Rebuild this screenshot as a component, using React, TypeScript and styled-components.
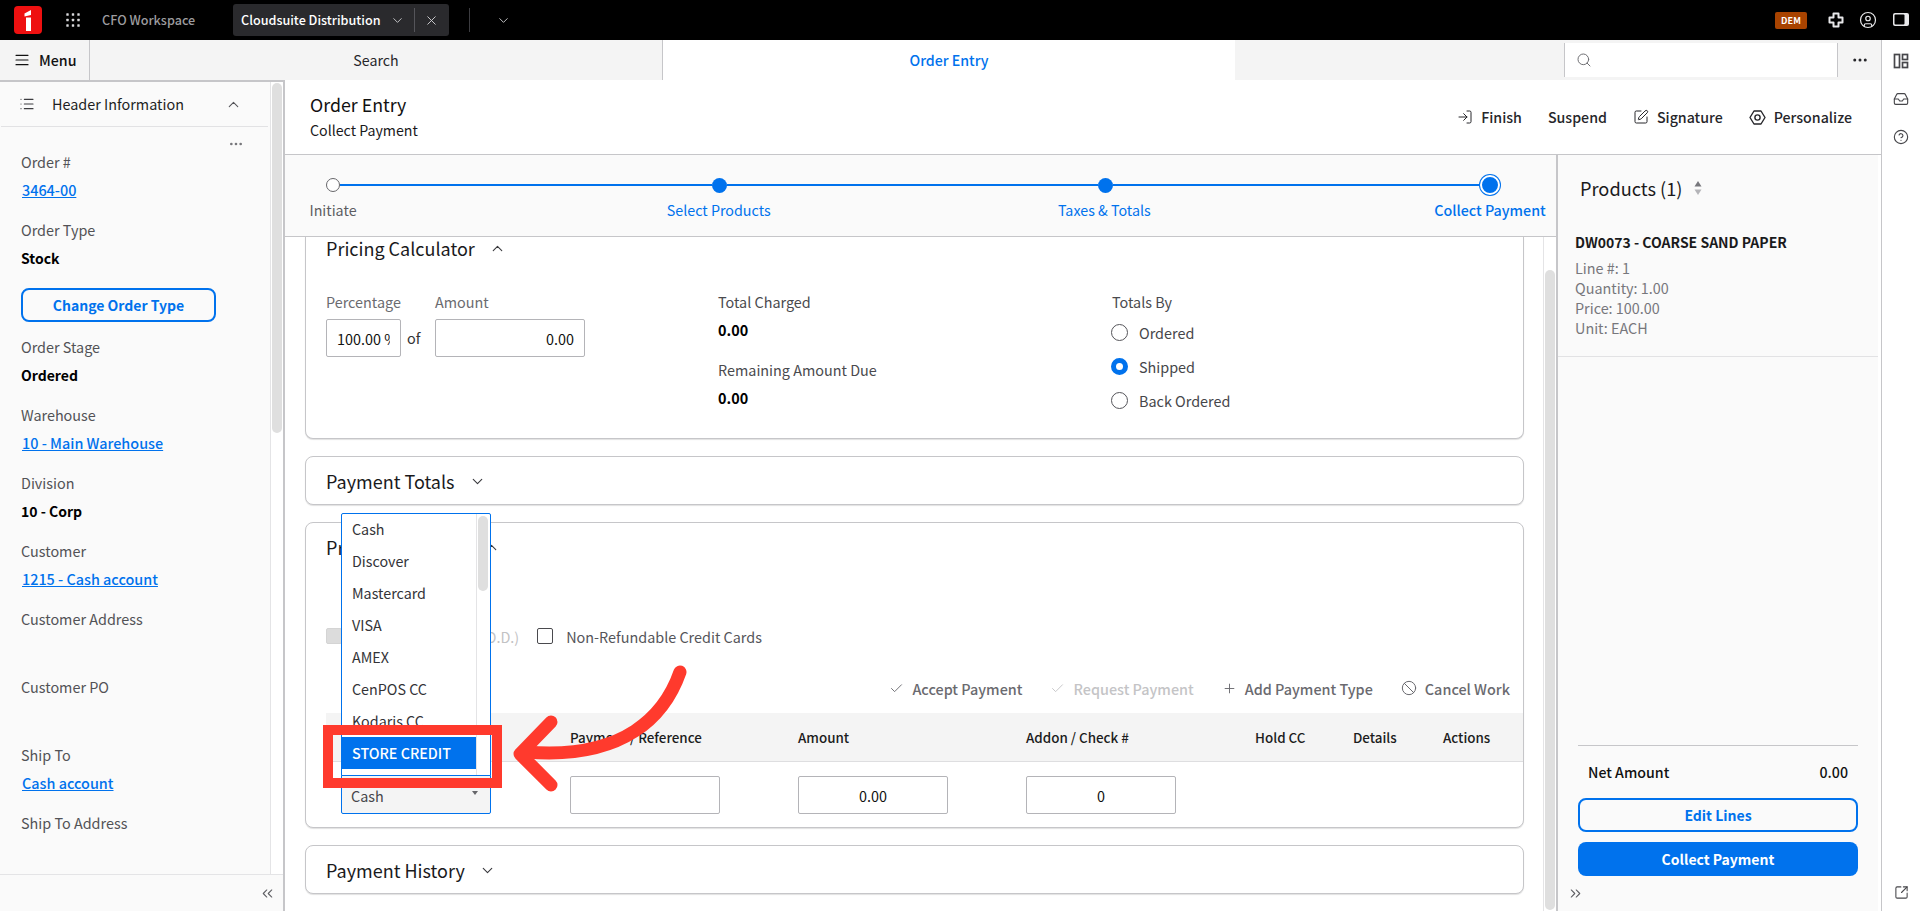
import React from 'react';
import styled, { createGlobalStyle } from 'styled-components';
import {
  AlignJustify, Ban, Check, ChevronDown, ChevronUp, ChevronsLeft, ChevronsRight, CircleHelp, CircleUser,
  Ellipsis, Inbox, List, LogIn, Plus, Search as SearchIcon, SquareArrowOutUpRight, SquarePen, X,
} from 'lucide-react';

const BLUE = '#0072ed';
const LINE = '#c6c6c9';

const Global = createGlobalStyle`
  html, body { margin: 0; padding: 0; height: 100%; background: #fff; overflow: hidden; }
  * { box-sizing: border-box; }
  body { font-family: "Noto Sans CJK JP", "Noto Sans", sans-serif; font-size: 14.4px; color: #1a1a1c; }
`;

const Page = styled.div`
  position: relative;
  width: 1920px;
  height: 911px;
  overflow: hidden;
  display: flex;
  flex-direction: column;
`;

/* ---------- top bar ---------- */
const TopBar = styled.header`
  height: 40px;
  flex: none;
  background: #000;
  display: flex;
  align-items: center;
  padding-left: 14px;
  color: #d6d6d8;
`;
const Logo = styled.svg`
  width: 28px;
  height: 28px;
  flex: none;
`;
const GridButton = styled.span`
  display: flex;
  margin-left: 24px;
  color: #d8d8da;
`;
const WorkspaceName = styled.span`
  margin-left: 22px;
  width: 93px;
  font-size: 12.6px;
  line-height: 20px;
  font-weight: 500;
  color: #9c9c9f;
  white-space: nowrap;
`;
const ContextTab = styled.div`
  margin-left: 38px;
  width: 216px;
  height: 32px;
  border-radius: 3px;
  background: #2a2a2d;
  display: flex;
  align-items: center;
  padding-left: 8px;
`;
const ContextName = styled.span`
  width: 141px;
  font-size: 12.6px;
  line-height: 20px;
  font-weight: 500;
  color: #fff;
  white-space: nowrap;
`;
const ContextChevron = styled.span`
  display: flex;
  margin-left: 8px;
  width: 16px;
  color: #c8c8ca;
`;
const BarDivider = styled.span`
  display: block;
  width: 1px;
  height: 24px;
  background: #55555a;
  margin-left: 8px;
`;
const ContextClose = styled.span`
  display: flex;
  margin-left: 9px;
  color: #d0d0d2;
`;
const BarDividerWide = styled(BarDivider)`
  margin-left: 20px;
  background: #3c3c40;
`;
const TabsChevron = styled.span`
  display: flex;
  margin-left: 26px;
  color: #c8c8ca;
`;
const TopRight = styled.div`
  margin-left: auto;
  display: flex;
  align-items: center;
  padding-right: 10px;
`;
const Badge = styled.span`
  width: 32px;
  height: 17px;
  border-radius: 2px;
  background: #a84300;
  color: #fff;
  font-size: 9px;
  line-height: 17px;
  font-weight: 700;
  text-align: center;
  letter-spacing: 0.2px;
  margin-right: 5px;
`;
const TopIcon = styled.svg`
  width: 18px;
  height: 18px;
  flex: none;
  margin-left: 15px;
  color: #e8e8ea;
`;
const UserIcon = styled.span`
  display: flex;
  margin-left: 14px;
  color: #e8e8ea;
`;

/* ---------- layout below the top bar ---------- */
const Below = styled.div`
  flex: 1;
  display: flex;
  min-height: 0;
`;
const MainArea = styled.div`
  width: 1881px;
  display: flex;
  flex-direction: column;
`;
const Rail = styled.aside`
  width: 39px;
  border-left: 1px solid ${LINE};
  background: #fff;
  display: flex;
  flex-direction: column;
  align-items: center;
  padding: 13px 0 11px;
  gap: 22px;
  color: #47474b;
`;
const RailIcon = styled.svg`
  width: 16px;
  height: 16px;
  flex: none;
`;
const RailButton = styled.span`
  display: flex;
  width: 16px;
  height: 16px;
`;
const RailBottom = styled.span`
  display: flex;
  margin-top: auto;
`;

/* ---------- nav row ---------- */
const NavBar = styled.nav`
  height: 40px;
  flex: none;
  background: #f4f4f4;
  display: flex;
  align-items: stretch;
`;
const MenuButton = styled.div`
  width: 90px;
  border-right: 1px solid ${LINE};
  display: flex;
  align-items: center;
  gap: 9px;
  padding-left: 14px;
  font-size: 14.2px;
  font-weight: 500;
  color: #111;
`;
const NavTab = styled.div<{ $active?: boolean }>`
  width: ${p => (p.$active ? '573px' : '572px')};
  display: flex;
  align-items: center;
  justify-content: center;
  font-size: 14.2px;
  font-weight: ${p => (p.$active ? 500 : 400)};
  color: ${p => (p.$active ? BLUE : '#26262a')};
  background: ${p => (p.$active ? '#fff' : 'transparent')};
  border-left: ${p => (p.$active ? `1px solid ${LINE}` : 'none')};
`;
const NavSpacer = styled.div`
  width: 329px;
`;
const NavSearch = styled.div`
  width: 274px;
  height: 34px;
  align-self: center;
  background: #fff;
  border-left: 1px solid ${LINE};
  border-right: 1px solid ${LINE};
  display: flex;
  align-items: center;
  padding-left: 11px;
  color: #707074;
`;
const NavMore = styled.div`
  flex: 1;
  display: flex;
  align-items: center;
  justify-content: center;
  color: #26262a;
`;

/* ---------- content row ---------- */
const ContentRow = styled.div`
  flex: 1;
  display: flex;
  min-height: 0;
`;

/* left panel */
const LeftPanel = styled.aside`
  width: 285px;
  flex: none;
  background: #fafafa;
  border-top: 2px solid ${LINE};
  border-right: 2px solid ${LINE};
  display: flex;
  flex-direction: column;
`;
const LeftTop = styled.div`
  height: 792px;
  display: flex;
`;
const LeftBody = styled.div`
  width: 270px;
  overflow: hidden;
`;
const ScrollTrack = styled.div<{ $w: number; $pad: number }>`
  width: ${p => p.$w}px;
  flex: none;
  padding-top: ${p => p.$pad}px;
  padding-left: 1px;
  background: #fff;
  border-left: 1px solid #e4e4e6;
`;
const ScrollThumb = styled.div<{ $h: number }>`
  width: 10px;
  height: ${p => p.$h}px;
  border-radius: 5px;
  background: #dfdfdf;
`;
const LeftFooter = styled.div`
  flex: 1;
  border-top: 1px solid #e4e4e6;
  display: flex;
  align-items: center;
  justify-content: flex-end;
  padding-right: 7px;
  color: #5d5d62;
`;
const HeaderRow = styled.div`
  height: 45px;
  border-bottom: 1px solid #e2e2e4;
  margin-left: 1px;
  margin-right: 2px;
  display: flex;
  align-items: center;
  padding-left: 18px;
  color: #3c3c40;
`;
const HeaderTitle = styled.span`
  margin-left: 17px;
  font-size: 14.4px;
  line-height: 24px;
  color: #1f1f23;
`;
const HeaderChevron = styled.span`
  display: flex;
  margin-left: auto;
  margin-right: 26px;
  color: #55555a;
`;
const DotsRow = styled.div`
  height: 21px;
  padding-top: 9px;
  padding-right: 26px;
  display: flex;
  justify-content: flex-end;
  color: #77777b;
`;
const FieldList = styled.div`
  padding-left: 21px;
  display: flex;
  flex-direction: column;
`;
const Field = styled.div`
  height: 68px;
`;
const FieldLabel = styled.div`
  font-size: 14.4px;
  line-height: 28px;
  color: #525256;
`;
const FieldValue = styled.div`
  font-size: 14px;
  line-height: 28px;
  font-weight: 700;
  color: #000;
`;
const FieldLink = styled.a`
  display: block;
  padding-left: 1px;
  font-size: 14.4px;
  line-height: 28px;
  font-weight: 500;
  color: ${BLUE};
  text-decoration: underline;
`;
const ChangeButton = styled.div`
  width: 195px;
  height: 34px;
  margin: 4px 0 11px;
  border: 2px solid ${BLUE};
  border-radius: 8px;
  color: ${BLUE};
  font-size: 14px;
  font-weight: 700;
  line-height: 30px;
  text-align: center;
`;

/* center */
const Main = styled.main`
  flex: 1;
  display: flex;
  flex-direction: column;
  min-width: 0;
`;
const PageHeader = styled.div`
  height: 75px;
  flex: none;
  background: #fff;
  border-bottom: 1px solid ${LINE};
  display: flex;
  align-items: center;
  justify-content: space-between;
  padding: 0 29px 0 25px;
`;
const PageTitle = styled.h1`
  margin: 0;
  font-size: 17.8px;
  line-height: 26px;
  font-weight: 400;
  color: #111;
`;
const PageSub = styled.div`
  font-size: 14.2px;
  line-height: 26px;
  color: #1a1a1c;
`;
const Actions = styled.div`
  display: flex;
  align-items: center;
  gap: 26px;
`;
const ActionItem = styled.span`
  display: flex;
  align-items: center;
  gap: 8px;
  font-size: 14.2px;
  font-weight: 500;
  color: #26262a;
  svg { flex: none; }
`;
const WorkRow = styled.div`
  flex: 1;
  display: flex;
  min-height: 0;
`;
const Center = styled.div`
  width: 1271px;
  flex: none;
  display: flex;
  flex-direction: column;
`;
const Stepper = styled.div`
  height: 82px;
  flex: none;
  background: #fafafa;
  border-bottom: 1px solid ${LINE};
  padding-top: 20px;
`;
const Track = styled.div`
  display: flex;
  align-items: center;
  height: 20px;
  padding-left: 41px;
`;
const Connector = styled.span<{ $w: number }>`
  width: ${p => p.$w}px;
  flex: none;
  height: 2.5px;
  background: ${BLUE};
`;
const DotStart = styled.span`
  width: 14px;
  height: 14px;
  flex: none;
  border-radius: 50%;
  background: #fff;
  border: 1.5px solid #66666a;
`;
const DotDone = styled.span`
  width: 15px;
  height: 15px;
  flex: none;
  border-radius: 50%;
  background: ${BLUE};
`;
const DotCurrent = styled.span`
  width: 20px;
  height: 20px;
  flex: none;
  border-radius: 50%;
  background: ${BLUE};
  border: 2px solid #fff;
  box-shadow: 0 0 0 1px ${BLUE};
`;
const LabelRow = styled.div`
  display: flex;
  justify-content: space-between;
  margin-top: 4px;
  padding-left: 48px;
  padding-right: 66px;
`;
const StepLabel = styled.div<{ $on?: boolean }>`
  width: 0;
  display: flex;
  justify-content: center;
  white-space: nowrap;
  font-size: 14.3px;
  line-height: 22px;
  color: ${p => (p.$on ? BLUE : '#5d5d62')};
`;
const StepLabelStrong = styled(StepLabel)`
  font-weight: 500;
`;
const ScrollArea = styled.div`
  flex: 1;
  min-height: 0;
  display: flex;
  background: #fff;
`;
const Cards = styled.div`
  width: 1258px;
  flex: none;
  padding: 0 19px 0 20px;
  display: flex;
  flex-direction: column;
  gap: 17px;
`;
const Card = styled.section`
  background: #fff;
  border: 1px solid ${LINE};
  border-radius: 8px;
  box-shadow: 0 1px 1px rgba(0, 0, 0, 0.12);
`;
const ClippedCard = styled(Card)`
  height: 202px;
  border-top: none;
  border-radius: 0 0 8px 8px;
`;
const CollapsedCard = styled(Card)`
  height: 49px;
`;
const PaymentCard = styled(Card)`
  height: 306px;
`;
const CardHead = styled.div`
  height: 48px;
  padding-left: 20px;
  display: flex;
  align-items: center;
  gap: 14px;
  color: #3a3a3e;
`;
const ClippedHead = styled(CardHead)`
  height: 22px;
`;
const CardTitle = styled.h2`
  margin: 0;
  font-size: 18px;
  line-height: 26px;
  font-weight: 400;
  color: #1a1a1c;
`;
const PricingGrid = styled.div`
  display: grid;
  grid-template-columns: 392px 394px 1fr;
  padding: 31px 0 0 20px;
`;
const Lbl = styled.div`
  font-size: 14.4px;
  line-height: 24px;
  color: #6b6b70;
`;
const DarkLbl = styled(Lbl)`
  color: #4a4a4e;
`;
const RadioTitle = styled(DarkLbl)`
  margin-bottom: 1px;
`;
const InputRow = styled.div`
  display: flex;
  align-items: flex-start;
`;
const Stack = styled.div`
  display: flex;
  flex-direction: column;
  gap: 5px;
`;
const OfText = styled.span`
  width: 34px;
  padding-left: 6px;
  margin-top: 29px;
  height: 37px;
  font-size: 14.4px;
  line-height: 37px;
  color: #333;
`;
const TextBox = styled.input<{ $w: number; $align?: string }>`
  display: block;
  width: ${p => p.$w}px;
  height: 38px;
  border: 1px solid #b4b4b8;
  border-radius: 2px;
  background: #fff;
  padding: 0 10px;
  font: inherit;
  font-size: 14.4px;
  color: #111;
  text-align: ${p => p.$align || 'left'};
  outline: none;
`;
const Totals = styled.div`
  display: flex;
  flex-direction: column;
`;
const Amount = styled.div`
  font-size: 14.4px;
  line-height: 24px;
  font-weight: 700;
  margin: 4px 0 16px;
  color: #000;
`;
const RadioColumn = styled.div`
  display: flex;
  flex-direction: column;
`;
const RadioRow = styled.div`
  display: flex;
  align-items: center;
  gap: 11px;
  height: 34px;
  margin-left: -1px;
  font-size: 14.4px;
  color: #46464a;
`;
const RadioDot = styled.span<{ $on?: boolean }>`
  width: 17px;
  height: 17px;
  flex: none;
  border-radius: 50%;
  background: #fff;
  border: ${p => (p.$on ? `5px solid ${BLUE}` : '1px solid #55555a')};
`;
const CheckRow = styled.div`
  margin: 55px 0 0 20px;
  height: 20px;
  display: flex;
  align-items: center;
  font-size: 14.4px;
`;
const Box = styled.span<{ $off?: boolean }>`
  width: 16px;
  height: 16px;
  flex: none;
  border-radius: 2px;
  border: 1px solid ${p => (p.$off ? '#d4d4d4' : '#4a4a4e')};
  background: ${p => (p.$off ? '#dcdcdc' : '#fff')};
`;
const CheckLabel = styled.span<{ $off?: boolean }>`
  margin-left: ${p => (p.$off ? '9px' : '13px')};
  margin-right: ${p => (p.$off ? '18px' : '0')};
  color: ${p => (p.$off ? '#c2c2c4' : '#55555a')};
  white-space: nowrap;
`;
const Toolbar = styled.div`
  margin-top: 27px;
  height: 30px;
  display: flex;
  align-items: center;
  justify-content: flex-end;
  gap: 28px;
  padding-right: 13px;
`;
const ToolItem = styled.span<{ $off?: boolean }>`
  display: flex;
  align-items: center;
  gap: 8px;
  font-size: 14.4px;
  font-weight: 500;
  color: ${p => (p.$off ? '#c4c4c6' : '#6a6a6f')};
`;
const Table = styled.div`
  margin: 10px 0 0 20px;
`;
const Row = styled.div`
  display: grid;
  grid-template-columns: 244px 228px 228px 229px 98px 90px 1fr;
`;
const HeadRow = styled(Row)`
  height: 49px;
  align-items: center;
  background: #f4f4f4;
  border-bottom: 1px solid #dedee0;
  font-size: 13.4px;
  font-weight: 500;
  color: #1c1c20;
`;
const BodyRow = styled(Row)`
  padding-top: 14px;
  align-items: start;
`;
const SelectBox = styled.div`
  position: relative;
  margin-left: 15px;
  margin-top: -1px;
  width: 150px;
  height: 39px;
  background: #f4f4f4;
  border: 1px solid ${BLUE};
  border-radius: 0 0 2px 2px;
  padding-left: 9px;
  font-size: 14.4px;
  line-height: 40px;
  color: #46464a;
  &::after {
    content: '';
    position: absolute;
    right: 12px;
    top: 15px;
    border-left: 3.5px solid transparent;
    border-right: 3.5px solid transparent;
    border-top: 4px solid #66666a;
  }
`;
const Dropdown = styled.div`
  position: absolute;
  left: -1px;
  bottom: 37px;
  width: 150px;
  height: 263px;
  background: #fff;
  border: 1px solid ${BLUE};
  border-radius: 2px 2px 0 0;
  display: flex;
  overflow: hidden;
  line-height: 32px;
`;
const OptionList = styled.div`
  width: 134px;
  flex: none;
  margin-top: -1px;
`;
const OptionItem = styled.div<{ $on?: boolean }>`
  height: 32px;
  line-height: 32px;
  padding-left: 10px;
  font-size: 14.3px;
  white-space: nowrap;
  color: ${p => (p.$on ? '#fff' : '#333337')};
  font-weight: ${p => (p.$on ? 500 : 400)};
  background: ${p => (p.$on ? BLUE : 'transparent')};
`;
const MenuScroll = styled.div`
  flex: 1;
  border-left: 1px solid #e4e4e6;
  padding: 2px 0 0 1px;
`;

/* right panel */
const RightPanel = styled.aside`
  flex: 1;
  border-left: 2px solid ${LINE};
  background: #fff;
  display: flex;
  min-width: 0;
`;
const RightInner = styled.div`
  width: 320px;
  flex: none;
  background: #fafafa;
  display: flex;
  flex-direction: column;
`;
const ProductsHead = styled.div`
  height: 70px;
  padding: 0 0 4px 22px;
  display: flex;
  align-items: center;
  gap: 12px;
  font-size: 18.2px;
  color: #1a1a1c;
`;
const ProductItem = styled.div`
  padding: 4px 0 18px 17px;
  border-bottom: 1px solid #e2e2e4;
`;
const ProductName = styled.div`
  font-size: 14px;
  line-height: 26px;
  font-weight: 700;
  margin-bottom: 3px;
  color: #1a1a1c;
`;
const ProductLine = styled.div`
  font-size: 14.4px;
  line-height: 20px;
  color: #77777c;
`;
const Summary = styled.div`
  margin-top: auto;
  padding: 0 20px;
`;
const SummaryRow = styled.div`
  border-top: 1px solid ${LINE};
  height: 53px;
  padding: 0 10px;
  display: flex;
  align-items: center;
  justify-content: space-between;
  font-size: 14.2px;
  font-weight: 500;
  color: #111;
`;
const OutlineButton = styled.div`
  height: 34px;
  border: 2px solid ${BLUE};
  border-radius: 8px;
  color: ${BLUE};
  font-size: 14px;
  font-weight: 700;
  line-height: 30px;
  text-align: center;
`;
const SolidButton = styled.div`
  height: 34px;
  margin-top: 10px;
  border-radius: 8px;
  background: ${BLUE};
  color: #fff;
  font-size: 14px;
  font-weight: 700;
  line-height: 34px;
  text-align: center;
`;
const RightFooter = styled.div`
  height: 35px;
  padding-left: 9px;
  display: flex;
  align-items: center;
  color: #5d5d62;
`;

const Annotation = styled.svg`
  position: absolute;
  left: 0;
  top: 0;
  width: 1920px;
  height: 911px;
  pointer-events: none;
  z-index: 10;
`;

const fields: { label: string; link?: string; strong?: string; button?: boolean }[] = [
  { label: 'Order #', link: '3464-00' },
  { label: 'Order Type', strong: 'Stock', button: true },
  { label: 'Order Stage', strong: 'Ordered' },
  { label: 'Warehouse', link: '10 - Main Warehouse' },
  { label: 'Division', strong: '10 - Corp' },
  { label: 'Customer', link: '1215 - Cash account' },
  { label: 'Customer Address' },
  { label: 'Customer PO' },
  { label: 'Ship To', link: 'Cash account' },
  { label: 'Ship To Address' },
];

const options = ['Cash', 'Discover', 'Mastercard', 'VISA', 'AMEX', 'CenPOS CC', 'Kodaris CC', 'STORE CREDIT'];

const GridDots = () => (
  <svg width="14" height="14" viewBox="0 0 14 14" fill="currentColor">
    {[1.5, 7, 12.5].flatMap(y => [1.5, 7, 12.5].map(x => <rect key={`${x}-${y}`} x={x - 1.2} y={y - 1.2} width="2.4" height="2.4" rx="0.5" />))}
  </svg>
);

const Personalize = () => (
  <svg width="17" height="17" viewBox="0 0 17 17" fill="none" stroke="currentColor" strokeWidth="1.4" strokeLinejoin="round">
    <path d="M5 2h7l4 6.500-4 6.500H5L1 8.500z" />
    <circle cx="8.500" cy="8.500" r="2.600" />
  </svg>
);

const SortMark = () => (
  <svg width="8" height="14" viewBox="0 0 8 14">
    <path d="M4 0l3.500 5.500h-7z" fill="#77777c" />
    <path d="M4 14L.5 8.500h7z" fill="#b4b4b8" />
  </svg>
);

export default function App() {
  return (
    <Page>
      <Global />
      <TopBar>
        <Logo viewBox="0 0 28 28">
          <rect width="28" height="28" rx="4" fill="#ee1010" />
          <path d="M12 11.500h5V25h-5z" fill="#fff" />
          <path d="M10.500 7.500L17 4v5l-6.500 1.500z" fill="#fff" />
        </Logo>
        <GridButton><GridDots /></GridButton>
        <WorkspaceName>CFO Workspace</WorkspaceName>
        <ContextTab>
          <ContextName>Cloudsuite Distribution</ContextName>
          <ContextChevron><ChevronDown size={15} strokeWidth={1.5} /></ContextChevron>
          <BarDivider />
          <ContextClose><X size={15} strokeWidth={1.5} /></ContextClose>
        </ContextTab>
        <BarDividerWide />
        <TabsChevron><ChevronDown size={15} strokeWidth={1.5} /></TabsChevron>
        <TopRight>
          <Badge>DEM</Badge>
          <TopIcon viewBox="0 0 18 18" fill="none" stroke="currentColor" strokeWidth="2">
            <path d="M6.500 2.500h5v4h4v5h-4v4h-5v-4h-4v-5h4z" strokeLinejoin="round" />
          </TopIcon>
          <UserIcon><CircleUser size={18} strokeWidth={1.6} /></UserIcon>
          <TopIcon viewBox="0 0 18 18">
            <rect x="1" y="2" width="16" height="13" rx="2" fill="#e8e8ea" />
            <rect x="2.500" y="3.500" width="10" height="10" rx="1" fill="#000" />
          </TopIcon>
        </TopRight>
      </TopBar>
      <Below>
        <MainArea>
          <NavBar>
            <MenuButton><AlignJustify size={16} strokeWidth={1.7} />Menu</MenuButton>
            <NavTab>Search</NavTab>
            <NavTab $active>Order Entry</NavTab>
            <NavSpacer />
            <NavSearch><SearchIcon size={16} strokeWidth={1.5} /></NavSearch>
            <NavMore><Ellipsis size={18} strokeWidth={2} /></NavMore>
          </NavBar>
          <ContentRow>
            <LeftPanel>
              <LeftTop>
                <LeftBody>
                  <HeaderRow>
                    <List size={16} strokeWidth={1.7} />
                    <HeaderTitle>Header Information</HeaderTitle>
                    <HeaderChevron><ChevronUp size={17} strokeWidth={1.5} /></HeaderChevron>
                  </HeaderRow>
                  <DotsRow><Ellipsis size={16} strokeWidth={2} /></DotsRow>
                  <FieldList>
                    {fields.map(f => (
                      <React.Fragment key={f.label}>
                        <Field>
                          <FieldLabel>{f.label}</FieldLabel>
                          {f.link && <FieldLink>{f.link}</FieldLink>}
                          {f.strong && <FieldValue>{f.strong}</FieldValue>}
                        </Field>
                        {f.button && <ChangeButton>Change Order Type</ChangeButton>}
                      </React.Fragment>
                    ))}
                  </FieldList>
                </LeftBody>
                <ScrollTrack $w={13} $pad={1}><ScrollThumb $h={350} /></ScrollTrack>
              </LeftTop>
              <LeftFooter><ChevronsLeft size={17} strokeWidth={1.5} /></LeftFooter>
            </LeftPanel>
            <Main>
              <PageHeader>
                <div>
                  <PageTitle>Order Entry</PageTitle>
                  <PageSub>Collect Payment</PageSub>
                </div>
                <Actions>
                  <ActionItem><LogIn size={16} strokeWidth={1.5} />Finish</ActionItem>
                  <ActionItem>Suspend</ActionItem>
                  <ActionItem><SquarePen size={16} strokeWidth={1.5} />Signature</ActionItem>
                  <ActionItem><Personalize />Personalize</ActionItem>
                </Actions>
              </PageHeader>
              <WorkRow>
                <Center>
                  <Stepper>
                    <Track>
                      <DotStart />
                      <Connector $w={371.5} />
                      <DotDone />
                      <Connector $w={371} />
                      <DotDone />
                      <Connector $w={367.5} />
                      <DotCurrent />
                    </Track>
                    <LabelRow>
                      <StepLabel>Initiate</StepLabel>
                      <StepLabel $on>Select Products</StepLabel>
                      <StepLabel $on>Taxes &amp; Totals</StepLabel>
                      <StepLabelStrong $on>Collect Payment</StepLabelStrong>
                    </LabelRow>
                  </Stepper>
                  <ScrollArea>
                    <Cards>
                      <ClippedCard>
                        <ClippedHead>
                          <CardTitle>Pricing Calculator</CardTitle>
                          <ChevronUp size={17} strokeWidth={1.6} />
                        </ClippedHead>
                        <PricingGrid>
                          <InputRow>
                            <Stack>
                              <Lbl>Percentage</Lbl>
                              <TextBox $w={75} readOnly defaultValue="100.00 %" />
                            </Stack>
                            <OfText>of</OfText>
                            <Stack>
                              <Lbl>Amount</Lbl>
                              <TextBox $w={150} $align="right" readOnly defaultValue="0.00" />
                            </Stack>
                          </InputRow>
                          <Totals>
                            <DarkLbl>Total Charged</DarkLbl>
                            <Amount>0.00</Amount>
                            <DarkLbl>Remaining Amount Due</DarkLbl>
                            <Amount>0.00</Amount>
                          </Totals>
                          <RadioColumn>
                            <RadioTitle>Totals By</RadioTitle>
                            <RadioRow><RadioDot />Ordered</RadioRow>
                            <RadioRow><RadioDot $on />Shipped</RadioRow>
                            <RadioRow><RadioDot />Back Ordered</RadioRow>
                          </RadioColumn>
                        </PricingGrid>
                      </ClippedCard>
                      <CollapsedCard>
                        <CardHead>
                          <CardTitle>Payment Totals</CardTitle>
                          <ChevronDown size={17} strokeWidth={1.6} />
                        </CardHead>
                      </CollapsedCard>
                      <PaymentCard>
                        <CardHead>
                          <CardTitle>Process Payment</CardTitle>
                          <ChevronUp size={17} strokeWidth={1.6} />
                        </CardHead>
                        <CheckRow>
                          <Box $off />
                          <CheckLabel $off>Cash On Delivery (C.O.D.)</CheckLabel>
                          <Box />
                          <CheckLabel>Non-Refundable Credit Cards</CheckLabel>
                        </CheckRow>
                        <Toolbar>
                          <ToolItem><Check size={15} strokeWidth={1.5} />Accept Payment</ToolItem>
                          <ToolItem $off><Check size={15} strokeWidth={1.5} />Request Payment</ToolItem>
                          <ToolItem><Plus size={15} strokeWidth={1.5} />Add Payment Type</ToolItem>
                          <ToolItem><Ban size={16} strokeWidth={1.5} />Cancel Work</ToolItem>
                        </Toolbar>
                        <Table>
                          <HeadRow>
                            <span />
                            <span>Payment / Reference</span>
                            <span>Amount</span>
                            <span>Addon / Check #</span>
                            <span>Hold CC</span>
                            <span>Details</span>
                            <span>Actions</span>
                          </HeadRow>
                          <BodyRow>
                            <SelectBox>
                              Cash
                              <Dropdown>
                                <OptionList>
                                  {options.map(o => (
                                    <OptionItem key={o} $on={o === 'STORE CREDIT'}>{o}</OptionItem>
                                  ))}
                                </OptionList>
                                <MenuScroll><ScrollThumb $h={75} /></MenuScroll>
                              </Dropdown>
                            </SelectBox>
                            <TextBox $w={150} readOnly defaultValue="" />
                            <TextBox $w={150} $align="center" readOnly defaultValue="0.00" />
                            <TextBox $w={150} $align="center" readOnly defaultValue="0" />
                          </BodyRow>
                        </Table>
                      </PaymentCard>
                      <CollapsedCard>
                        <CardHead>
                          <CardTitle>Payment History</CardTitle>
                          <ChevronDown size={17} strokeWidth={1.6} />
                        </CardHead>
                      </CollapsedCard>
                    </Cards>
                    <ScrollTrack $w={13} $pad={33}><ScrollThumb $h={640} /></ScrollTrack>
                  </ScrollArea>
                </Center>
                <RightPanel>
                  <RightInner>
                    <ProductsHead>Products (1)<SortMark /></ProductsHead>
                    <ProductItem>
                      <ProductName>DW0073 - COARSE SAND PAPER</ProductName>
                      <ProductLine>Line #: 1</ProductLine>
                      <ProductLine>Quantity: 1.00</ProductLine>
                      <ProductLine>Price: 100.00</ProductLine>
                      <ProductLine>Unit: EACH</ProductLine>
                    </ProductItem>
                    <Summary>
                      <SummaryRow><span>Net Amount</span><span>0.00</span></SummaryRow>
                      <OutlineButton>Edit Lines</OutlineButton>
                      <SolidButton>Collect Payment</SolidButton>
                    </Summary>
                    <RightFooter><ChevronsRight size={17} strokeWidth={1.5} /></RightFooter>
                  </RightInner>
                </RightPanel>
              </WorkRow>
            </Main>
          </ContentRow>
        </MainArea>
        <Rail>
          <RailButton>
            <RailIcon viewBox="0 0 16 16" fill="none" stroke="currentColor" strokeWidth="1.7">
              <rect x="1.500" y="1.500" width="5" height="13" />
              <rect x="9.500" y="1.500" width="5" height="5" />
              <rect x="9.500" y="9.500" width="5" height="5" />
            </RailIcon>
          </RailButton>
          <RailButton><Inbox size={16} strokeWidth={1.7} /></RailButton>
          <RailButton><CircleHelp size={16} strokeWidth={1.7} /></RailButton>
          <RailBottom><SquareArrowOutUpRight size={15} strokeWidth={1.7} /></RailBottom>
        </Rail>
      </Below>
      <Annotation viewBox="0 0 1920 911" fill="none">
        <rect x="328" y="730" width="169" height="53" stroke="#ff3a2d" strokeWidth="10" />
        <path d="M680 672C665 715 625 760 527 752" stroke="#ff3a2d" strokeWidth="13" strokeLinecap="round" />
        <path d="M551 722L520 754L551 785" stroke="#ff3a2d" strokeWidth="13" strokeLinecap="round" strokeLinejoin="round" />
      </Annotation>
    </Page>
  );
}
